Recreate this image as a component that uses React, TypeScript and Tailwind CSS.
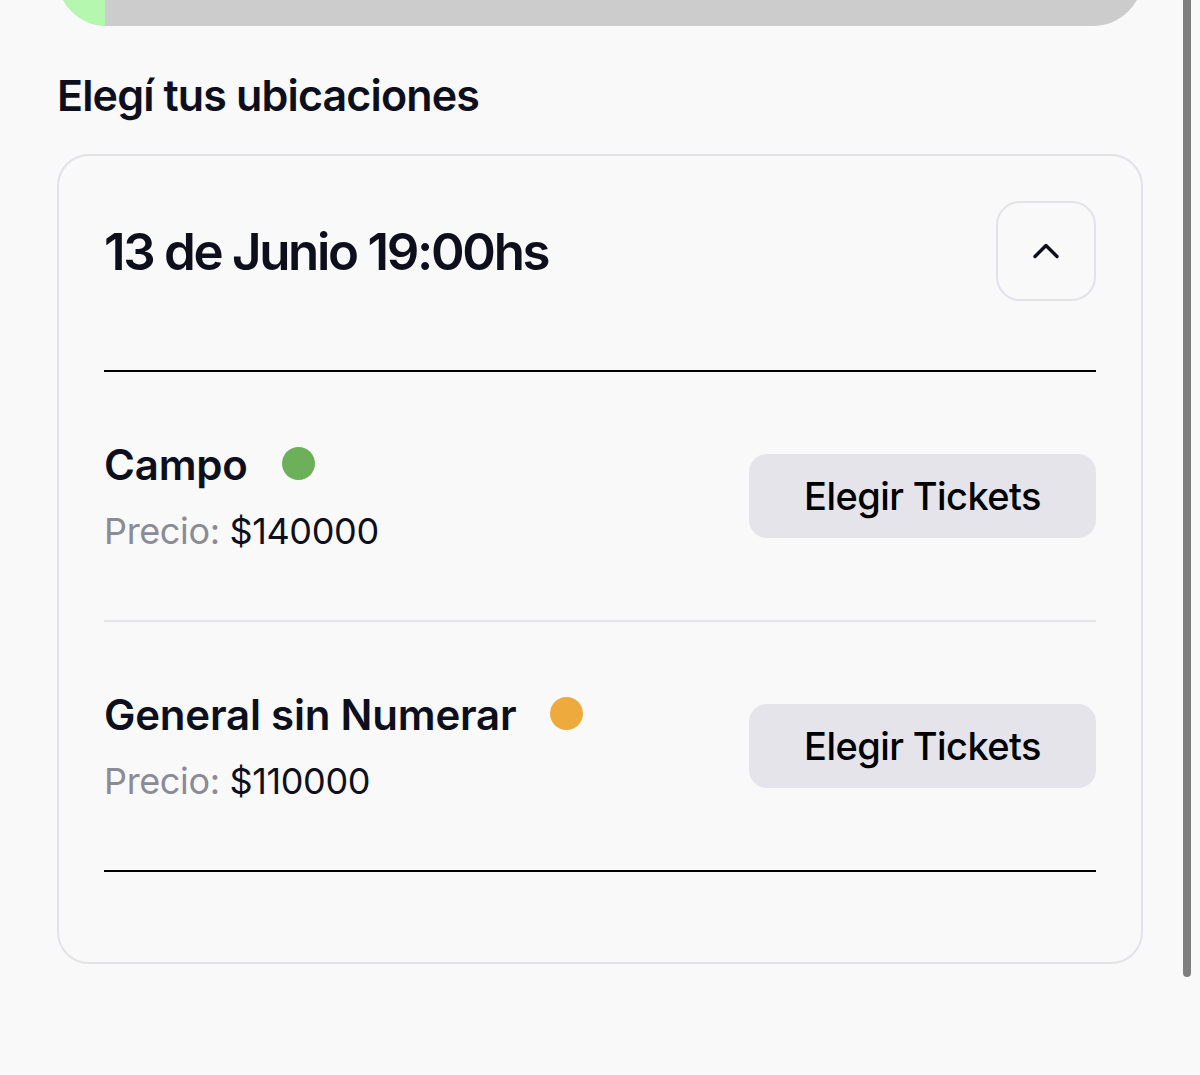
import React from "react";

type Ubicacion = {
  nombre: string;
  precio: string;
  color: string;
};

const ubicaciones: Ubicacion[] = [
  { nombre: "Campo", precio: "$140000", color: "bg-[#6cb05a]" },
  { nombre: "General sin Numerar", precio: "$110000", color: "bg-[#eeaa3c]" },
];

function ChevronUp() {
  return (
    <svg width="28" height="16" viewBox="0 0 28 16" fill="none">
      <path
        d="M3 13.5 L14 2.5 L25 13.5"
        stroke="#0d0f1c"
        strokeWidth="3.4"
        strokeLinecap="round"
        strokeLinejoin="round"
      />
    </svg>
  );
}

function UbicacionRow({ nombre, precio, color }: Ubicacion) {
  return (
    <div className="flex h-[248px] items-center justify-between">
      <div className="flex flex-col">
        <div className="flex h-[50px] items-center gap-[34px]">
          <span className="text-[42px] leading-[50px] font-semibold tracking-[-0.005em] text-[#0d0f1c]">
            {nombre}
          </span>
          <span className={`-mt-[3px] h-[33px] w-[33px] rounded-full ${color}`} />
        </div>
        <div className="mt-[19px] text-[36px] leading-[44px] tracking-[-0.01em]">
          <span className="text-[#8b8b96]">Precio: </span>
          <span className="text-[#0d0f1c]">{precio}</span>
        </div>
      </div>
      <button className="flex h-[84px] w-[347px] items-center justify-center rounded-[18px] bg-[#e4e4ea] text-[38px] font-medium tracking-[-0.015em] text-black">
        Elegir Tickets
      </button>
    </div>
  );
}

export default function App() {
  return (
    <div className="relative h-[1075px] w-full overflow-hidden bg-[#f9f9fa] font-['Inter',sans-serif]">
      {/* barra de progreso */}
      <div className="px-[57px]">
        <div className="-mt-[74px] h-[100px] overflow-hidden rounded-[50px] bg-[#cccccc]">
          <div className="h-full w-[48px] bg-[#b6f7b0]" />
        </div>
      </div>

      <h2 className="ml-[57px] mt-[48px] text-[43px] leading-[42px] font-semibold tracking-[-0.02em] text-[#0d0f1c]">
        Elegí tus ubicaciones
      </h2>

      <div className="mx-[57px] mt-[38px] rounded-[32px] border-2 border-[#e2e2ea] px-[45px] pt-[45px] pb-[90px]">
        <div className="flex items-center justify-between">
          <span className="text-[51px] leading-none font-semibold tracking-[-0.045em] text-[#0d0f1c]">
            13 de Junio 19:00hs
          </span>
          <button className="flex h-[100px] w-[100px] items-center justify-center rounded-[24px] border-2 border-[#e2e2ea]">
            <ChevronUp />
          </button>
        </div>

        <div className="mt-[69px] h-[2px] bg-black" />
        <UbicacionRow {...ubicaciones[0]} />
        <div className="h-[2px] bg-[#e3e3e8]" />
        <UbicacionRow {...ubicaciones[1]} />
        <div className="h-[2px] bg-black" />
      </div>

      {/* scrollbar */}
      <div className="absolute left-[1183px] top-0 h-[977px] w-[8px] rounded-b-full bg-[#7f7f7f]" />
    </div>
  );
}
